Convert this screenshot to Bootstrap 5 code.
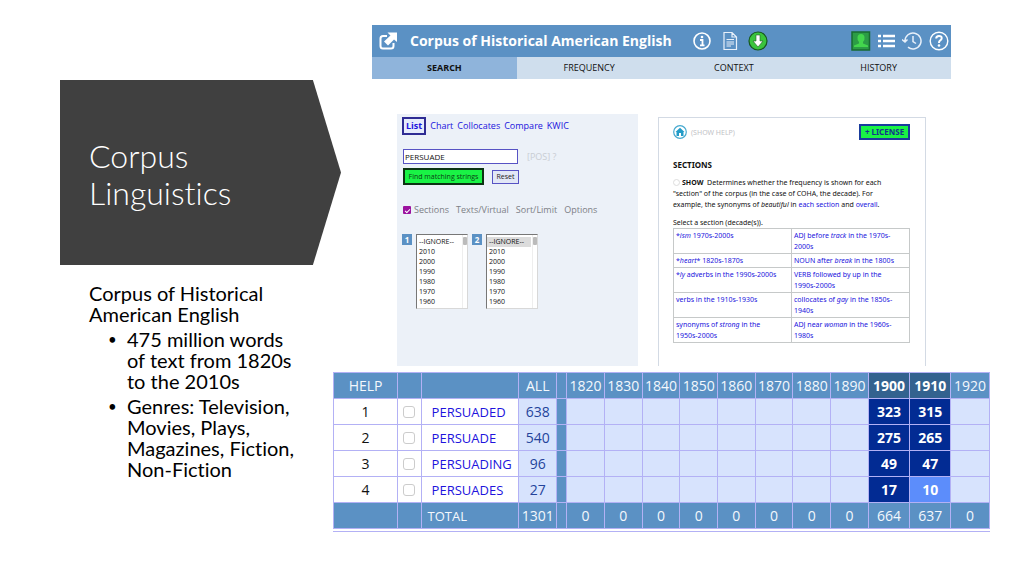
<!DOCTYPE html>
<html lang="en">
<head>
<meta charset="utf-8">
<meta name="viewport" content="width=device-width, initial-scale=1">
<title>Corpus Linguistics</title>
<link href="https://cdn.jsdelivr.net/npm/bootstrap@5.3.0/dist/css/bootstrap.min.css" rel="stylesheet">
<style>
  :root { --bar: #5b91c4; --rule: #b3b1f5; --pale: #d7e3fd; --link: #2113dd; }
  body { font-family: "Open Sans", "Noto Sans", sans-serif; color: #111; background: #fff; }
  a { text-decoration: none; color: var(--link); }
  .slide { display: grid; grid-template-columns: minmax(0, 273fr) minmax(0, 657fr); padding: 25px 34px 40px 60px; }

  /* left side: title arrow and notes */
  .notes { font-family: Lato, sans-serif; font-variant-ligatures: none; padding-top: 55px; }
  .arrow { background: #404040; color: #fff; height: 185px; margin-right: -8px; padding: 2px 29px 0;
    clip-path: polygon(0 0, 90% 0, 100% 50%, 90% 100%, 0 100%); }
  .arrow h1 { font-size: 32px; line-height: 37px; font-weight: 300; }
  .blurb { font-size: 20px; line-height: 21px; padding: 18px 0 0 29px; color: #000; white-space: nowrap; }
  .blurb ul { padding-left: 38px; list-style: none; }
  .blurb li { margin-top: 4px; position: relative; }
  .blurb li::before { content: "•"; position: absolute; left: -19px; font-size: 15px; }

  /* corpus site */
  .site { padding: 0 39px; }
  .topbar { background: var(--bar); height: 32px; padding: 0 2px 0 7px; }
  .topbar h2 { font-size: 14px; font-weight: 700; color: #fff; line-height: 32px; white-space: nowrap; }
  .tabs a { flex: 1 1 0; background: #cfdeed; color: #111; font-size: 9px; line-height: 22px; text-align: center; }
  .tabs a.current { background: #8fb4db; font-weight: 700; }
  .panels { display: grid; grid-template-columns: minmax(0, 241fr) minmax(0, 268fr); padding: 35px 25px 0; gap: 20px; }
  .query { background: #ecf1f8; height: 252px; padding: 3px 5px 0 6px; }
  .modes { font-size: 9px; line-height: 17px; gap: 4px; }
  .modes a.current { border: 2px solid #2f2c94; font-weight: 700; line-height: 14px; padding: 0 2px; margin-left: -1px; background: #e6ecfb; }
  .wordrow { margin-top: 14px; }
  .word { width: 115px; height: 15px; font-size: 8px; padding: 0 1px; border: 1px solid #5753c4; color: #111; }
  .pos { font-size: 9px; line-height: 15px; color: #c9cdd3; margin-left: 9px; }
  .find { font-size: 7px; line-height: 13px; border: 2px solid #0c3312; background: #19f345; color: #0b4014; padding: 0; width: 81px; }
  .reset { font-size: 7px; line-height: 12px; border: 1px solid #5753c4; background: #e2e7f6; color: #222; padding: 0; width: 27px; }
  .opts { font-size: 9px; line-height: 12px; gap: 7px; color: #7d8086; margin-top: 19px; }
  .opts a { color: #7d8086; }
  .opts input { width: 8px; height: 8px; margin: 0 3px 0 0; appearance: none; background: #9b129f; border-radius: 1px; display: inline-grid; place-items: center; }
  .opts input:checked::before { content: ""; width: 5px; height: 3px; border: solid #fff; border-width: 0 0 1px 1px; rotate: -45deg; }
  .lists { margin-top: 18px; margin-left: -1px; }
  .num { background: var(--bar); color: #fff; font-size: 8px; font-weight: 700; line-height: 11px; width: 10px; text-align: center; }
  .years { width: 52px; height: 75px; font-size: 7px; border: 1px solid #d8d8d8; border-top-color: #777; border-left-color: #777; padding: 2px 0 0; background: #fff; color: #111; overflow: hidden; border-radius: 0; }
  .years option { padding: 0 0 0 2px; line-height: 10px; min-height: 10px; height: 10px; margin-right: 6px; }
  .years option.on { background: #dcdcdc; }
  .scroller { position: absolute; top: 1px; right: 1px; width: 5px; height: 73px; border-left: 1px solid #eee; }
  .scroller::before { content: ""; display: block; width: 4px; height: 8px; background: #bbb; border-radius: 1px; margin-top: 2px; }

  .help { border: 1px solid #d3dae4; border-bottom: 0; margin-top: 3px; padding: 6px 15px 0 14px; font-family: "Noto Sans", "Open Sans", sans-serif; font-size: 7px; line-height: 11px; }
  .showhelp { color: #bfc2c6; }
  .license { font-size: 8px; line-height: 12px; font-weight: 700; color: #12348f; background: #19f345; border: 2px solid #1a3c9c; padding: 0; width: 51px; }
  .help h3 { font-size: 8px; line-height: 11px; font-weight: 700; margin: 19px 0 7px; }
  .help p { margin: 0 0 7px; white-space: nowrap; }
  .help p.pick { margin: 0; }
  .show input { width: 7px; height: 7px; margin: 0 2px 0 0; appearance: none; border: 1px solid #ddd; border-radius: 50%; }
  .samples { width: 100%; table-layout: fixed; }
  .samples td { border: 1px solid #c6c9c9; padding: 1px 2px; vertical-align: top; }

  .freq { width: 100%; table-layout: fixed; font-size: 14px; line-height: 20px; text-align: center; margin-top: 6px; }
  .freq th, .freq td { border: 1px solid var(--rule); height: 26px; padding: 0; font-weight: 500; white-space: nowrap; background: var(--pale); }
  .freq thead th, .freq tfoot td, .freq .gap { background: var(--bar); color: #f4f8fd; }
  .freq tbody th, .freq .plain { background: #fff; }
  .freq .lemma { text-align: left; padding-left: 10px; font-size: 13px; }
  .freq tfoot .lemma { padding-left: 6px; }
  .freq .total { color: #24439b; }
  .freq thead th.peak { background: #33628f; font-weight: 700; color: #fff; }
  .freq td.peak { background: #022b93; font-weight: 700; color: #fff; }
  .freq td.low { background: #5c8dfb; font-weight: 700; color: #fff; }
  .freq input { display: block; width: 12px; height: 12px; margin: 0 auto; appearance: none; border: 1px solid #ccc; border-radius: 3px; background: #fff; }
  .tail { border-top: 1px solid var(--rule); margin-top: 2px; }
</style>
</head>
<body>
<main class="slide">
  <section class="notes">
    <header class="arrow d-flex align-items-center"><h1 class="m-0">Corpus<br>Linguistics</h1></header>
    <div class="blurb">
      <p class="m-0">Corpus of Historical<br>American English</p>
      <ul class="m-0">
        <li>475 million words<br>of text from 1820s<br>to the 2010s</li>
        <li>Genres: Television,<br>Movies, Plays,<br>Magazines, Fiction,<br>Non-Fiction</li>
      </ul>
    </div>
  </section>

  <section>
    <div class="site">
      <header class="topbar d-flex align-items-center">
        <svg width="19" height="20" viewBox="0 0 19 20" aria-hidden="true"><path d="M8 5H4Q1.500 5 1.500 7.500V15Q1.500 17.500 4 17.500H12Q14.500 17.500 14.500 15V12" fill="none" stroke="#fff" stroke-width="2"/><path d="M8.500 1.500H18V11L15 8.500L9 14.500L5 10.500L11.500 4.500Z" fill="#fff"/></svg>
        <h2 class="m-0 ms-2 ps-1 pe-3">Corpus of Historical American English</h2>
        <div class="d-flex align-items-center ms-1" style="gap:9px">
          <svg width="20" height="20" viewBox="0 0 20 20"><circle cx="10" cy="10" r="8" fill="none" stroke="#fff" stroke-width="1.600"/><circle cx="10" cy="6" r="1.300" fill="#fff"/><path d="M8 9H10.500V14M8 14.300H12.500" fill="none" stroke="#fff" stroke-width="1.800"/></svg>
          <svg width="18" height="20" viewBox="0 0 18 20"><path d="M3 1.500H11L15.500 6V18.500H3Z M11 1.500V6H15.500M5.500 8.500H13M5.500 11H13M5.500 13H13M5.500 15H10" fill="none" stroke="#e8f0fa" stroke-width="1.200"/></svg>
          <svg width="20" height="20" viewBox="0 0 20 20"><circle cx="10" cy="10" r="9" fill="#3ac43d" stroke="#17581f" stroke-width="1.200"/><path d="M8 4H12V10H15L10 16L5 10H8Z" fill="#fff" stroke="#245b28" stroke-width=".6"/></svg>
        </div>
        <div class="d-flex align-items-center ms-auto" style="gap:7px">
          <svg width="20" height="20" viewBox="0 0 20 20"><rect x="1" y="1" width="17.500" height="18" fill="#2c9c46" stroke="#176b31" stroke-width="1.500"/><path d="M3 16V14.500L8 12.500V11Q6 9 6.500 6Q7 3 10 3T13.500 6Q14 9 12 11V12.500L17 14.500V16Z" fill="#43d64d"/></svg>
          <svg width="17" height="16" viewBox="0 0 17 16"><path d="M0 3H3M0 8H3M0 13H3M5 3H17M5 8H17M5 13H17" stroke="#fff" stroke-width="2.600"/></svg>
          <svg width="20" height="20" viewBox="0 0 20 20"><path d="M3 10A8 8 0 1 1 6 16.200M0 8.500L3 11L5.500 8.500M11 5V10.500L14 12.500" fill="none" stroke="#e8f0fa" stroke-width="1.500"/></svg>
          <svg width="20" height="20" viewBox="0 0 20 20"><circle cx="10" cy="10" r="8.800" fill="none" stroke="#fff" stroke-width="1.400"/><path d="M7.200 7.500Q7.200 5 10 5T12.700 7.300Q12.700 8.700 11 9.600Q10 10.200 10 12" fill="none" stroke="#fff" stroke-width="2"/><circle cx="10" cy="14.500" r="1.300" fill="#fff"/></svg>
        </div>
      </header>
      <nav class="tabs d-flex">
        <a href="#" class="current">SEARCH</a><a href="#">FREQUENCY</a><a href="#">CONTEXT</a><a href="#">HISTORY</a>
      </nav>
      <div class="panels">
        <form class="query">
          <div class="modes d-flex">
            <a href="#" class="current">List</a><a href="#">Chart</a><a href="#">Collocates</a><a href="#">Compare</a><a href="#">KWIC</a>
          </div>
          <div class="wordrow d-flex"><input class="word" type="text" value="PERSUADE" aria-label="Word or phrase"><span class="pos">[POS] ?</span></div>
          <div class="d-flex align-items-center gap-2 mt-1"><button type="button" class="find">Find matching strings</button><button type="button" class="reset">Reset</button></div>
          <div class="opts d-flex"><label class="d-flex align-items-center"><input type="checkbox" checked>Sections</label><a href="#">Texts/Virtual</a><a href="#">Sort/Limit</a><a href="#">Options</a></div>
          <div class="lists d-flex align-items-start gap-1">
            <label class="num" for="y1">1</label>
            <div class="position-relative d-flex"><select id="y1" class="years" size="7"><option>--IGNORE--</option><option>2010</option><option>2000</option><option>1990</option><option>1980</option><option>1970</option><option>1960</option></select><span class="scroller"></span></div>
            <label class="num" for="y2">2</label>
            <div class="position-relative d-flex"><select id="y2" class="years" size="7"><option class="on">--IGNORE--</option><option>2010</option><option>2000</option><option>1990</option><option>1980</option><option>1970</option><option>1960</option></select><span class="scroller"></span></div>
          </div>
        </form>
        <section class="help">
          <div class="d-flex align-items-center gap-1">
            <svg width="14" height="14" viewBox="0 0 14 14"><circle cx="7" cy="7" r="6.300" fill="#fff" stroke="#46a9cf" stroke-width="1.200"/><path d="M2.500 7L7 2.800L11.500 7H10.500V11H8V8H6V11H3.500V7Z" fill="#239cc8"/></svg>
            <a href="#" class="showhelp me-auto">(SHOW HELP)</a>
            <button type="button" class="license">+ LICENSE</button>
          </div>
          <h3>SECTIONS</h3>
          <p><label class="show d-inline-flex align-items-center align-top"><input type="radio"><b>SHOW</b></label>&nbsp; Determines whether the frequency is shown for each<br>"section" of the corpus (in the case of COHA, the decade). For<br>example, the synonyms of <i>beautiful</i> in <a href="#">each section</a> and <a href="#">overall</a>.</p>
          <p class="pick">Select a section (decade(s)).</p>
          <table class="samples">
            <tr><td><a href="#">*<i>ism</i> 1970s-2000s</a></td><td><a href="#">ADJ before <i>track</i> in the 1970s-<br>2000s</a></td></tr>
            <tr><td><a href="#">*<i>heart</i>* 1820s-1870s</a></td><td><a href="#">NOUN after <i>break</i> in the 1800s</a></td></tr>
            <tr><td><a href="#">*<i>ly</i> adverbs in the 1990s-2000s</a></td><td><a href="#">VERB followed by up in the<br>1990s-2000s</a></td></tr>
            <tr><td><a href="#">verbs in the 1910s-1930s</a></td><td><a href="#">collocates of <i>gay</i> in the 1850s-<br>1940s</a></td></tr>
            <tr><td><a href="#">synonyms of <i>strong</i> in the<br>1950s-2000s</a></td><td><a href="#">ADJ near <i>woman</i> in the 1960s-<br>1980s</a></td></tr>
          </table>
        </section>
      </div>
    </div>

    <table class="freq">
      <colgroup><col style="width:63px"><col style="width:23px"><col style="width:96px"><col style="width:37px"><col style="width:10px"><col span="8" style="width:37px"><col style="width:41px"><col style="width:40px"><col style="width:38px"></colgroup>
      <thead><tr><th>HELP</th><th></th><th></th><th>ALL</th><th></th><th>1820</th><th>1830</th><th>1840</th><th>1850</th><th>1860</th><th>1870</th><th>1880</th><th>1890</th><th class="peak">1900</th><th class="peak">1910</th><th>1920</th></tr></thead>
      <tbody>
        <tr><th>1</th><td class="plain"><input type="checkbox" aria-label="PERSUADED"></td><td class="plain lemma"><a href="#">PERSUADED</a></td><td class="total">638</td><td class="gap"></td><td></td><td></td><td></td><td></td><td></td><td></td><td></td><td></td><td class="peak">323</td><td class="peak">315</td><td></td></tr>
        <tr><th>2</th><td class="plain"><input type="checkbox" aria-label="PERSUADE"></td><td class="plain lemma"><a href="#">PERSUADE</a></td><td class="total">540</td><td class="gap"></td><td></td><td></td><td></td><td></td><td></td><td></td><td></td><td></td><td class="peak">275</td><td class="peak">265</td><td></td></tr>
        <tr><th>3</th><td class="plain"><input type="checkbox" aria-label="PERSUADING"></td><td class="plain lemma"><a href="#">PERSUADING</a></td><td class="total">96</td><td class="gap"></td><td></td><td></td><td></td><td></td><td></td><td></td><td></td><td></td><td class="peak">49</td><td class="peak">47</td><td></td></tr>
        <tr><th>4</th><td class="plain"><input type="checkbox" aria-label="PERSUADES"></td><td class="plain lemma"><a href="#">PERSUADES</a></td><td class="total">27</td><td class="gap"></td><td></td><td></td><td></td><td></td><td></td><td></td><td></td><td></td><td class="peak">17</td><td class="low">10</td><td></td></tr>
      </tbody>
      <tfoot><tr><td></td><td></td><td class="lemma">TOTAL</td><td>1301</td><td></td><td>0</td><td>0</td><td>0</td><td>0</td><td>0</td><td>0</td><td>0</td><td>0</td><td>664</td><td>637</td><td>0</td></tr></tfoot>
    </table>
    <div class="tail"></div>
  </section>
</main>
<script src="https://cdn.jsdelivr.net/npm/bootstrap@5.3.0/dist/js/bootstrap.bundle.min.js"></script>
</body>
</html>
